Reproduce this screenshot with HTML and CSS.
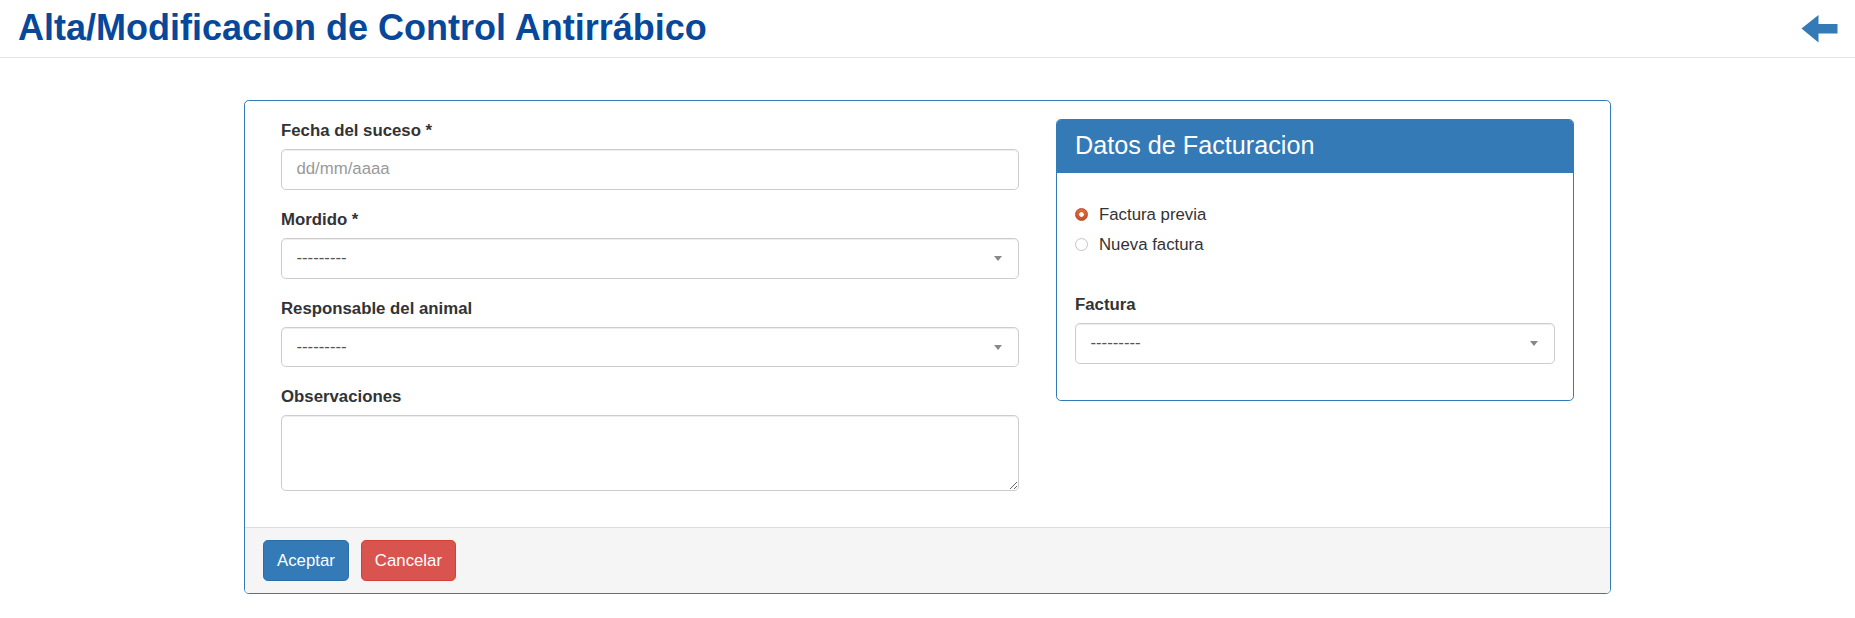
FILE: index.html
```html
<!DOCTYPE html>
<html lang="es">
<head>
<meta charset="utf-8">
<title>Alta/Modificacion de Control Antirrábico</title>
<link rel="stylesheet" href="styles.css">
</head>
<body>
<header class="topbar">
  <h2 class="page-title">Alta/Modificacion de Control Antirrábico</h2>
  <a class="back-link" href="#" aria-label="Volver">
    <svg class="back-icon" width="38" height="30" viewBox="0 0 38 30" aria-hidden="true">
      <path d="M1.5 14.5 L18.5 1 V10 H37.5 V19.5 H18.5 V28.5 Z" fill="#337ab7"/>
    </svg>
  </a>
</header>

<main class="main">
  <form class="panel">
    <div class="panel-body">
      <div class="col-left">
        <div class="form-group">
          <label class="form-label">Fecha del suceso *</label>
          <input class="form-control" type="text" placeholder="dd/mm/aaaa">
        </div>
        <div class="form-group">
          <label class="form-label">Mordido *</label>
          <div class="form-control select"><span>---------</span></div>
        </div>
        <div class="form-group">
          <label class="form-label">Responsable del animal</label>
          <div class="form-control select"><span>---------</span></div>
        </div>
        <div class="form-group">
          <label class="form-label">Observaciones</label>
          <textarea class="form-control textarea"></textarea>
        </div>
      </div>
      <div class="col-right">
        <div class="sub-panel">
          <div class="sub-heading">
            <h3 class="sub-title">Datos de Facturacion</h3>
          </div>
          <div class="sub-body">
            <div class="radio-group">
              <div class="radio">
                <label class="radio-label"><input class="radio-input" type="radio" name="fact" checked>Factura previa</label>
              </div>
              <div class="radio">
                <label class="radio-label"><input class="radio-input" type="radio" name="fact">Nueva factura</label>
              </div>
            </div>
            <div class="form-group">
              <label class="form-label">Factura</label>
              <div class="form-control select"><span>---------</span></div>
            </div>
          </div>
        </div>
      </div>
    </div>
    <div class="panel-footer">
      <button type="button" class="btn btn-primary">Aceptar</button>
      <button type="button" class="btn btn-danger">Cancelar</button>
    </div>
  </form>
</main>
</body>
</html>
```
FILE: styles.css
```css
html, body {
  margin: 0;
  padding: 0;
  background: #fff;
}

body {
  font-family: "Liberation Sans", Arial, Helvetica, sans-serif;
  font-size: 16.8px;
  line-height: 1.42857;
  color: #333;
}

/* Header */
.topbar {
  display: flex;
  justify-content: space-between;
  align-items: flex-start;
  padding: 8px 17px 9px 18px;
  border-bottom: 1px solid #e5e5e5;
}

.page-title {
  margin: 0;
  font-size: 36px;
  line-height: 40px;
  font-weight: bold;
  color: #08489a;
}

.back-link {
  display: block;
  margin-top: 6px;
  line-height: 0;
}

.back-icon {
  display: block;
}

/* Main panel */
.main {
  padding: 42px 244px 0;
}

.panel {
  border: 1px solid #337ab7;
  border-radius: 4.8px;
  background: #fff;
}

.panel-body {
  display: grid;
  grid-template-columns: 738px 1fr;
  column-gap: 37px;
  align-items: start;
  padding: 18px 36px;
}

.form-group {
  margin-bottom: 18px;
}

.form-label {
  display: block;
  font-weight: bold;
  line-height: 24px;
  margin-bottom: 6px;
}

.form-control {
  display: block;
  width: 100%;
  box-sizing: border-box;
  height: 40.8px;
  padding: 7.2px 14.4px;
  font: inherit;
  line-height: 24px;
  color: #555;
  background: #fff;
  border: 1px solid #ccc;
  border-radius: 4.8px;
  box-shadow: inset 0 1px 1px rgba(0, 0, 0, .075);
}

.form-control::placeholder {
  color: #999;
}

.textarea {
  height: 76px;
  resize: vertical;
}

.select {
  position: relative;
}

.select::after {
  content: "";
  position: absolute;
  right: 16px;
  top: 50%;
  margin-top: -2px;
  border-left: 4px solid transparent;
  border-right: 4px solid transparent;
  border-top: 5px solid #888;
}

/* Billing sub-panel */
.sub-panel {
  border: 1px solid #337ab7;
  border-radius: 4.8px;
}

.sub-heading {
  background: #337ab7;
  color: #fff;
  padding: 12px 18px;
  border-bottom: 1px solid #337ab7;
  border-radius: 3.8px 3.8px 0 0;
}

.sub-title {
  margin: 0;
  font-size: 25.2px;
  font-weight: normal;
  line-height: 1.1;
}

.sub-body {
  padding: 18px;
}

.radio-group {
  margin-bottom: 36px;
}

.radio {
  margin: 12px 0;
}

.radio + .radio {
  margin-top: -6px;
}

.radio-label {
  display: flex;
  align-items: center;
  line-height: 24px;
  cursor: pointer;
}

.radio-input {
  appearance: none;
  -webkit-appearance: none;
  box-sizing: border-box;
  width: 13px;
  height: 13px;
  margin: 0 11px 0 0;
  border-radius: 50%;
  border: 1px solid #c4c4c4;
  background: #fff;
  flex: none;
}

.radio-input:checked {
  border-color: #b24f2a;
  background: radial-gradient(circle, #fff 0 2px, transparent 2.6px), linear-gradient(#e26a3d, #c4532a);
}

/* Footer */
.panel-footer {
  display: flex;
  gap: 12px;
  padding: 12px 18px;
  background: #f5f5f5;
  border-top: 1px solid #ddd;
  border-radius: 0 0 3.8px 3.8px;
}

.btn {
  font: inherit;
  line-height: 24px;
  height: 41px;
  padding: 7.2px 13px;
  border: 1px solid transparent;
  border-radius: 4.8px;
  color: #fff;
  cursor: pointer;
}

.btn-primary {
  background: #337ab7;
  border-color: #2e6da4;
}

.btn-danger {
  background: #d9534f;
  border-color: #d43f3a;
}
```
